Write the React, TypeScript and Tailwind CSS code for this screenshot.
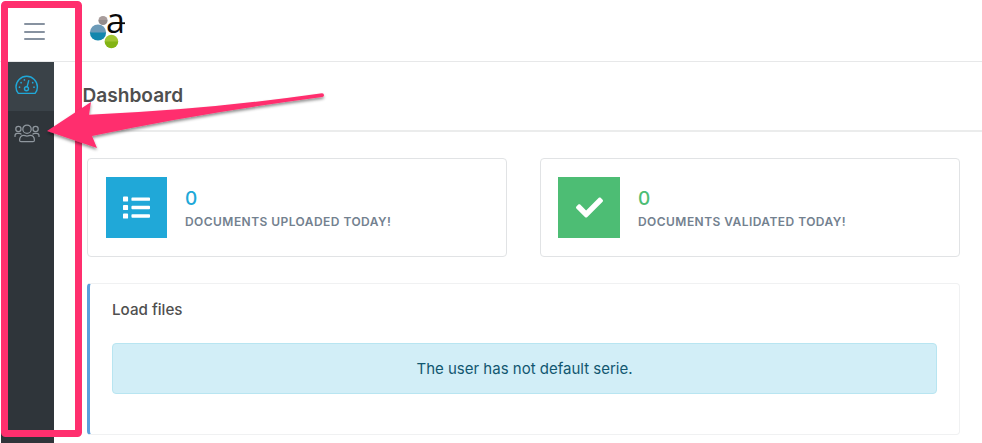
import type { ReactNode } from 'react';
import { FaCheck, FaList } from 'react-icons/fa';

function Logo() {
  return (
    <svg className="block h-[46px] w-[48px] overflow-visible" viewBox="0 0 48 46">
      <defs>
        <linearGradient id="blue" x2="0" y2="1">
          <stop offset="0.45" stopColor="#6b9ab8" />
          <stop offset="0.55" stopColor="#1386ad" />
        </linearGradient>
        <linearGradient id="green" x2="0" y2="1">
          <stop offset="0.45" stopColor="#a1c532" />
          <stop offset="0.55" stopColor="#83b414" />
        </linearGradient>
        <linearGradient id="gray" x2="0" y2="1">
          <stop offset="0.5" stopColor="#a89c9b" />
          <stop offset="0.5" stopColor="#938b8b" />
        </linearGradient>
      </defs>
      <circle cx="15" cy="10.5" r="4.6" fill="url(#gray)" />
      <circle cx="10" cy="22.5" r="8.1" fill="url(#blue)" />
      <circle cx="23.4" cy="31.5" r="6.8" fill="url(#green)" />
      <text x="18" y="23.2" fontSize="34" fontFamily="'Open Sans', sans-serif" fill="#0a0a0a">a</text>
      <path d="M33 13.2h4" stroke="#0a0a0a" strokeWidth="1.8" />
    </svg>
  );
}

function GaugeIcon() {
  return (
    <svg className="block h-[20px] w-[24px]" viewBox="0 0 24 20" fill="none" stroke="currentColor" strokeWidth="1.4" strokeLinecap="round" strokeLinejoin="round">
      <path d="M3.3 18.4C1.7 16.6 1 14.4 1 12A10.7 10.7 0 0 1 22.4 12C22.4 14.4 21.7 16.6 20.1 18.4Z" />
      <circle cx="11.5" cy="13.8" r="2" />
      <path d="M12.1 11.7L13.7 5.6" />
      <g strokeWidth="1.7">
        <path d="M9.4 4.9h.01M6.1 7.7h.01M4.5 12.2h.01M17.700 7.7h.01M19 12.2h.01" />
      </g>
    </svg>
  );
}

function PeopleIcon() {
  return (
    <svg className="block h-[20px] w-[26px]" viewBox="0 0 26 20" fill="none" stroke="currentColor" strokeWidth="1.25" strokeLinecap="round" strokeLinejoin="round">
      <circle cx="13" cy="5.2" r="4.2" />
      <path d="M5.600 16.200c0-3.200 1.800-4.900 4.100-4.900c1.100 0 1.700.7 3.300.7s2.200-.7 3.300-.7c2.300 0 4.100 1.700 4.100 4.900c0 1-.5 1.500-1.400 1.500H7c-.9 0-1.400-.5-1.400-1.500Z" />
      <circle cx="4.4" cy="4.9" r="2.6" />
      <circle cx="21.600" cy="4.9" r="2.6" />
      <path d="M1 12.400v-.7c0-1.500 1-2.300 2.300-2.300h2c.7 0 1.300.2 1.700.600M25 12.400v-.7c0-1.500-1-2.300-2.300-2.300h-2c-.7 0-1.300.2-1.700.600" />
    </svg>
  );
}

function StatCard({ icon, pad, tile, color, label }: { icon: ReactNode; pad: string; tile: string; color: string; label: string }) {
  return (
    <div className={`flex h-[99px] w-[420px] items-center rounded border border-[#e1e3e5] ${pad}`}>
      <div className={`flex h-[61px] shrink-0 items-center justify-center text-white ${tile}`}>{icon}</div>
      <div className="ml-[18px] pt-[3px]">
        <div className={`text-[19px] font-medium leading-[24px] ${color}`}>0</div>
        <div className="mt-[1px] whitespace-nowrap text-[12px] font-semibold leading-[20px] tracking-[0.45px] text-[#73818f]">{label}</div>
      </div>
    </div>
  );
}

function Annotation() {
  return (
    <svg className="pointer-events-none absolute left-0 top-0 h-[443px] w-[340px]" viewBox="0 0 340 443">
      <defs>
        <filter id="shadow" x="-10%" y="-20%" width="120%" height="150%">
          <feDropShadow dx="0" dy="2" stdDeviation="1.5" floodColor="#000" floodOpacity="0.45" />
        </filter>
      </defs>
      <rect x="4.5" y="4.5" width="74" height="429" rx="1" fill="none" stroke="#ff2f6e" strokeWidth="7" strokeLinejoin="round" />
      <path
        d="M47 131L91 102L89 114.7Q205 110 322 93.3Q324 93.5 324 95.2Q324 96.7 322.3 97Q200 113 92 136L97 148Z"
        fill="#ff2f6e"
        filter="url(#shadow)"
      />
    </svg>
  );
}

export default function App() {
  return (
    <div className="relative flex h-[443px] w-[982px] flex-col overflow-hidden bg-white font-['Inter',sans-serif] text-[#4f4f4f]">
      <header className="flex h-[62px] shrink-0 border-b border-[#e7e8e9]">
        <button className="ml-[24px] mt-[23px] flex h-[17px] w-[21px] flex-col justify-between" aria-label="Menu">
          <span className="h-[2px] w-full rounded bg-[#8792a0]" />
          <span className="h-[2px] w-full rounded bg-[#8792a0]" />
          <span className="h-[2px] w-full rounded bg-[#8792a0]" />
        </button>
        <div className="ml-[43px] mt-[10px]"><Logo /></div>
      </header>
      <div className="flex min-h-0 flex-1">
        <aside className="ml-[1px] w-[53px] shrink-0 bg-[#2f353a]">
          <div className="flex h-[49px] items-start bg-[#3a4248] pl-[14px] pt-[13px] text-[#20a8d8]"><GaugeIcon /></div>
          <div className="flex h-[48px] items-start pl-[12.500px] pt-[13px] text-[#8f979e]"><PeopleIcon /></div>
        </aside>
        <main className="min-w-0 flex-1">
          <h1 className="h-[70px] border-b-2 border-[#ebecec] pl-[28.500px] pt-[19px] text-[19.1px] font-semibold leading-[28px]">Dashboard</h1>
          <div className="ml-[33px] mt-[26px] flex gap-[33px]">
            <StatCard icon={<FaList size={27} />} pad="pl-[18px]" tile="w-[61px] bg-[#20a8d8]" color="text-[#20a8d8]" label="DOCUMENTS UPLOADED TODAY!" />
            <StatCard icon={<FaCheck size={27} />} pad="pl-[17px]" tile="w-[62px] bg-[#4dbd74]" color="text-[#4dbd74]" label="DOCUMENTS VALIDATED TODAY!" />
          </div>
          <section className="ml-[33px] mt-[26px] h-[152px] w-[873px] rounded border border-l-[3px] border-[#f0f1f2] border-l-[#5b9fdc] pl-[22px] pr-[22px] pt-[15px]">
            <h2 className="text-[15.2px] font-medium leading-[22px]">Load files</h2>
            <div className="mt-[22px] flex h-[51px] items-center justify-center rounded border border-[#b8e5f1] bg-[#d2eef7] pt-[2px] text-[15px] text-[#115770]">The user has not default serie.</div>
          </section>
        </main>
      </div>
      <Annotation />
    </div>
  );
}
